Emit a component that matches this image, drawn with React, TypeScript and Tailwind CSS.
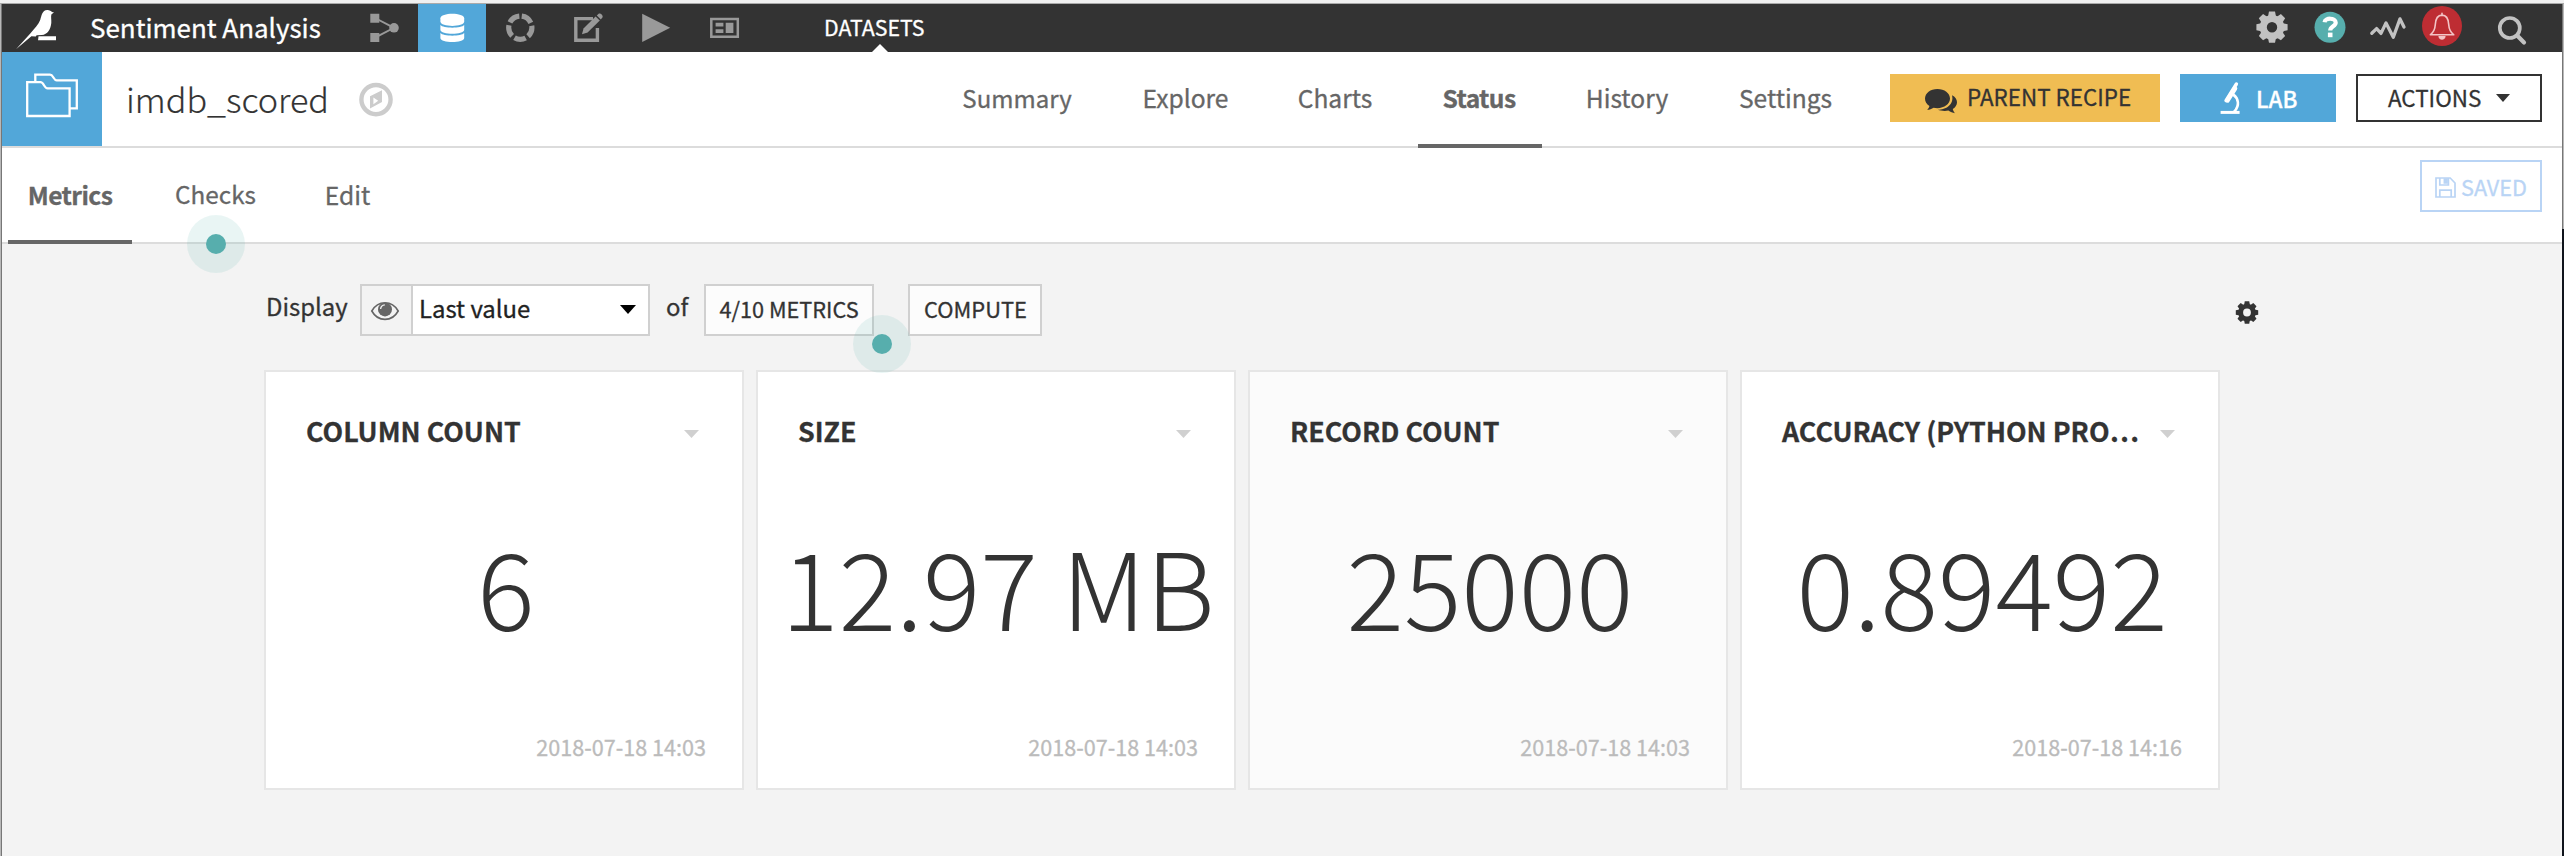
import type { ReactNode } from "react";

function Gear({ cx, cy, hole, body, outer, tooth }: { cx: number; cy: number; hole: number; body: number; outer: number; tooth: number }) {
  const mid = (hole + body) / 2;
  return (
    <g>
      <circle cx={cx} cy={cy} r={mid} fill="none" stroke="currentColor" strokeWidth={body - hole} />
      {[0, 45, 90, 135, 180, 225, 270, 315].map((a) => (
        <path
          key={a}
          transform={`rotate(${a} ${cx} ${cy})`}
          fill="currentColor"
          d={`M${cx - tooth} ${cy - body + 1.5} L${cx - tooth * 0.75} ${cy - outer} H${cx + tooth * 0.75} L${cx + tooth} ${cy - body + 1.5} Z`}
        />
      ))}
    </g>
  );
}

function Bird() {
  return (
    <svg className="h-12 w-[88px] shrink-0 text-white" viewBox="2 4 88 48" fill="currentColor">
      <path d="M16 49.2 L30.5 33.2 C34.5 28.5 38.6 24.5 40.2 20 C41.6 15.8 42 10.2 47.2 10 C49.6 9.9 51 11.2 52 12 L54 12.6 L51.5 14.3 C50.6 16.3 51.6 19.5 51.3 23 C50.7 29.5 47.5 34.6 41.8 35 L36.6 35.2 L35.8 36.4 L31.4 36.2 Z" />
      <path d="M38.5 36.2 H56 V40.3 H38 Z" />
    </svg>
  );
}

function NavCell({ active, children }: { active?: boolean; children: ReactNode }) {
  return (
    <button className={active ? "h-12 w-[68px] bg-[#52a7d9] text-white" : "h-12 w-[68px] text-[#999]"}>
      <svg className="h-12 w-[68px]" viewBox="0 0 68 48" fill="currentColor">
        {children}
      </svg>
    </button>
  );
}

function TopBar() {
  return (
    <header className="flex h-12 bg-[#333] text-white">
      <Bird />
      <div className="w-[260px] pb-0.5 text-[25.95px] leading-[46px] whitespace-nowrap">Sentiment Analysis</div>
      <nav className="flex">
        <NavCell>
          <path d="M20.3 9.7h9v9h-9zM20.3 29h9v9h-9z" />
          <circle cx="44" cy="23.8" r="4.8" />
          <path d="M26 14.5 L44 23.8 L26 33.2" fill="none" stroke="currentColor" strokeWidth="1.9" />
        </NavCell>
        <NavCell active>
          <path d="M22.4 14.2 C22.4 8.2 46.2 8.2 46.2 14.2 V17.6 C46.2 23.4 22.4 23.4 22.4 17.6 Z" />
          <path d="M22.4 21 C25 24.5 43.6 24.5 46.2 21 V25.8 C46.2 31.2 22.4 31.2 22.4 25.8 Z" />
          <path d="M22.4 29 C25 32.5 43.6 32.5 46.2 29 V34 C46.2 39.4 22.4 39.4 22.4 34 Z" />
        </NavCell>
        <NavCell>
          <circle
            cx="34.3"
            cy="23.7"
            r="11.6"
            fill="none"
            stroke="currentColor"
            strokeWidth="5.2"
            strokeDasharray="11.6 2.977"
            strokeDashoffset="-1.49"
            transform="rotate(-90 34.3 23.7)"
          />
        </NavCell>
        <NavCell>
          <path d="M39 14.6 H21.8 V36.3 H43.4 V24" fill="none" stroke="currentColor" strokeWidth="3.4" />
          <path d="M28 30.3 L29.5 24.6 L41.6 12.6 L45.8 16.6 L33.6 28.6 Z" />
          <path d="M42.8 11.4 L44.6 9.8 C46.4 8.6 49.6 11.6 48.4 13.6 L46.8 15.4 Z" />
        </NavCell>
        <NavCell>
          <path d="M20.2 9.7 L48.2 23.8 L20.2 38 Z" />
        </NavCell>
        <NavCell>
          <path d="M21.3 15 H47.8 V32.8 H21.3 Z" fill="none" stroke="currentColor" strokeWidth="2.5" />
          <path d="M25.6 18.8h7.8v3.7h-7.8zM25.6 25.2h7.8v3.7h-7.8zM35.7 18.8h7.7v10.1h-7.7z" />
        </NavCell>
      </nav>
      <div className="relative ml-[66px] pb-0.5 text-[21.3px] leading-[45px]">
        DATASETS
        <svg className="absolute top-10 left-[48px] h-2 w-4" viewBox="0 0 16 8">
          <path d="M0 8 L8 0 L16 8Z" fill="#fff" />
        </svg>
      </div>
      <div className="ml-auto flex text-[#c2c2c2]">
        <svg className="h-12 w-[51px]" viewBox="10 4 51 48">
          <Gear cx={32} cy={27.2} hole={5.2} body={12.3} outer={15.6} tooth={4} />
        </svg>
        <svg className="h-12 w-14" viewBox="61 4 56 48">
          <circle cx="90" cy="27.3" r="15.5" fill="#57aead" />
          <path d="M84.6 22.2 C85 17.6 95.6 17.4 95.7 22.6 C95.8 26.4 90.2 26.2 90.2 30.6" fill="none" stroke="#fff" strokeWidth="4.2" />
          <path d="M87.9 32.6h4.6v4.6h-4.6z" fill="#fff" />
        </svg>
        <svg className="h-12 w-[58px]" viewBox="117 4 58 48" fill="none" stroke="currentColor" strokeWidth="3.3" strokeLinecap="round" strokeLinejoin="round">
          <path d="M131.8 33.3 L136.6 28.6 L141 33.4 L146 22.9 L153.3 37.2 L160 18.9 L164 27" />
        </svg>
        <svg className="h-12 w-[58px]" viewBox="175 4 58 48">
          <circle cx="202" cy="26" r="20" fill="#be2d33" />
          <path
            d="M190.3 34.8 C194 32 195 29.5 195.3 24.5 C195.6 19 197.4 15.2 202 15.1 C206.6 15.2 208.4 19 208.7 24.5 C209 29.5 210 32 213.8 34.8 Z M202 15 V13.2"
            fill="none"
            stroke="#f3c4c6"
            strokeWidth="1.6"
            strokeLinejoin="round"
            strokeLinecap="round"
          />
          <path d="M198.4 36 H205.6 C205.4 41 198.6 41 198.4 36Z" fill="#f3c4c6" />
        </svg>
        <svg className="h-12 w-[89px]" viewBox="233 4 89 48" fill="none" stroke="currentColor">
          <circle cx="269.8" cy="28" r="10" strokeWidth="3.7" />
          <path d="M277.4 35.8 L284 42.4" strokeWidth="4.2" strokeLinecap="round" />
        </svg>
      </div>
    </header>
  );
}

function DatasetHeader() {
  return (
    <div className="flex h-24 border-b-2 border-[#dcdcdc] bg-white">
      <div className="h-[94px] w-[100px] shrink-0 bg-[#52a7d9]">
        <svg className="h-[94px] w-[100px]" viewBox="2 52 100 94" fill="none" stroke="#fff" strokeWidth="2.3">
          <path d="M27.2 82.2 H40.5 C44 82.2 44 88.3 47.6 88.3 H69.6 V116 H27.2 Z" />
          <path d="M35.3 82 V74.6 H50 C53.4 74.6 53.4 80.3 56.6 80.3 H76.8 V108.3 H70" />
        </svg>
      </div>
      <div className="w-[257px] pl-6 text-[34.2px] leading-[92px] font-light text-[#333] [-webkit-text-stroke:0.2px]">imdb_scored</div>
      <svg className="h-[94px] w-[34px] shrink-0 text-[#ccc]" viewBox="359 53 34 94">
        <circle cx="376" cy="100.6" r="14.6" fill="none" stroke="currentColor" strokeWidth="4.4" />
        <path fillRule="evenodd" fill="currentColor" d="M382 91.2 V103 L370 109.4 V97.2 Z M373.4 98.6 V105.2 L378.2 101.8 Z" />
      </svg>
      <nav className="ml-[545px] flex gap-5 text-[24.6px] leading-[91px] text-[#666]">
        <div className="w-40 pr-0.5 text-center text-[24px]">Summary</div>
        <div className="w-[135px] text-center">Explore</div>
        <div className="w-[125px] pr-px text-center">Charts</div>
        <div className="h-24 w-[124px] border-b-4 border-[#666] pr-0.5 text-center font-bold tracking-[-0.6px]">Status</div>
        <div className="w-[132px] pr-0.5 text-center">History</div>
        <div className="w-36 pr-px text-center">Settings</div>
      </nav>
      <div className="mt-[22px] mr-5 ml-auto flex h-12 gap-5 text-[22.4px] whitespace-nowrap">
        <button className="flex w-[270px] bg-[#f0bd53] pl-[34px] leading-[45px] text-[#333]">
          <svg className="h-12 w-[43px]" viewBox="1924 74 43 48" fill="currentColor">
            <path d="M1937.4 89 C1944.4 89 1950 93.2 1950 98.6 C1950 104 1944.4 108.2 1937.4 108.2 C1936 108.2 1934.8 108 1933.6 107.7 C1931.6 109 1929.6 109.7 1927.2 109.8 C1928.4 108.6 1929.2 107.4 1929.4 106.1 C1926.6 104.3 1925 101.6 1925 98.6 C1925 93.2 1930.4 89 1937.4 89 Z" />
            <path d="M1952 95.2 C1955.2 96.8 1957 99.4 1957 102.2 C1957 105 1955.4 107.4 1952.8 109 C1953 110.4 1953.8 111.8 1955 113.2 C1952.6 113 1950.4 112 1948.4 110.6 C1944.6 111.4 1940.6 110.8 1937.8 109.8 C1945.8 109.7 1954.4 104.6 1952 95.2 Z" />
          </svg>
          PARENT RECIPE
        </button>
        <button className="flex w-[156px] bg-[#52a7d9] pl-[38px] leading-[49px] font-medium text-white">
          <svg className="mr-0.5 h-12 w-9" viewBox="2218 74 36 48" fill="none" stroke="currentColor" strokeLinecap="round">
            <path d="M2236.4 84 L2226 100.6" strokeWidth="3.4" />
            <path d="M2235 88.4 L2227.4 100.4" strokeWidth="4.6" />
            <path d="M2233.4 94.6 C2238.4 98.4 2240 105 2234.4 111.4" strokeWidth="2.6" />
            <path d="M2220.6 112.4 H2239.6" strokeWidth="3" strokeLinecap="butt" />
          </svg>
          LAB
        </button>
        <button className="flex w-[186px] border-2 border-[#333] bg-white pl-[30px] leading-[42px] text-[#333]">
          ACTIONS
          <svg className="mt-[18px] ml-[15px] h-2 w-[14px]" viewBox="0 0 14 8">
            <path d="M0 0 H14 L7 8Z" fill="#333" />
          </svg>
        </button>
      </div>
    </div>
  );
}

function Pulse() {
  return (
    <span className="absolute z-10 flex size-[58px] items-center justify-center rounded-full bg-[#57aead]/13">
      <span className="size-5 rounded-full bg-[#57aead]" />
    </span>
  );
}

function StatusTabs() {
  return (
    <div className="flex h-24 border-b-2 border-[#dcdcdc] bg-white pl-1.5 text-[24.6px] leading-[92px] text-[#666]">
      <div className="h-24 w-[124px] border-b-4 border-[#666] text-center font-bold tracking-[-0.6px]">Metrics</div>
      <div className="relative ml-5 w-[130px] pr-[3px] text-center text-[24.3px]">
        Checks
        <div className="absolute top-[67px] left-[35px]">
          <Pulse />
        </div>
      </div>
      <div className="ml-5 w-[95px] pr-1 text-center">Edit</div>
      <button className="mt-3 mr-5 ml-auto flex h-[52px] w-[122px] border-2 border-[#b9d4f5] pl-[13px] text-[21.7px] leading-[49px] text-[#b9d4f5]">
        <svg className="mt-[15px] mr-[5px] h-[21px] w-[21px]" viewBox="0 0 21 21" fill="none" stroke="currentColor" strokeWidth="1.7">
          <path d="M1 1 H15.2 L20 6 V20 H1 Z M4.8 20 V13.2 H16.2 V20 M4.8 1 V8 H13.4 V1" />
          <path d="M9.4 2 H12 V6 H9.4Z" fill="currentColor" />
        </svg>
        SAVED
      </button>
    </div>
  );
}

function Controls() {
  return (
    <div className="flex h-[52px] text-[23.9px] text-[#333]">
      <div className="w-24 pl-0.5 leading-[43px]">Display</div>
      <div className="flex w-[290px] border-2 border-[#d0d0d0] bg-white leading-[44px] text-[#222]">
        <svg className="h-12 w-[51px] shrink-0 border-r-2 border-[#d0d0d0] bg-[#f3f3f3]" viewBox="362 286 49 48">
          <path d="M371.8 311 C378 300 392 300 398.2 311 C392 322.2 378 322.2 371.8 311 Z" fill="none" stroke="#666" strokeWidth="1.6" />
          <circle cx="385" cy="309.4" r="7" fill="#666" />
          <path d="M380.6 309 C380.8 306.6 382.4 305 384.8 304.8" fill="none" stroke="#f3f3f3" strokeWidth="1.3" />
        </svg>
        <span className="ml-[6px]">Last value</span>
        <svg className="mt-[19px] mr-3 ml-auto h-[9px] w-4" viewBox="0 0 16 9">
          <path d="M0 0 H16 L8 9Z" fill="#000" />
        </svg>
      </div>
      <div className="w-[54px] pl-4 leading-[43px]">of</div>
      <button className="relative w-[170px] border-2 border-[#d0d0d0] bg-[#fcfcfc] text-center text-[21.7px] leading-[45px]">
        <span className="block pb-[3px]">4/10 METRICS</span>
        <div className="absolute top-[29px] left-[147px]">
          <Pulse />
        </div>
      </button>
      <button className="ml-[34px] w-[134px] border-2 border-[#d0d0d0] bg-[#fcfcfc] text-center text-[21.9px] leading-[45px]">
        <span className="block pb-[3px] pl-px">COMPUTE</span>
      </button>
      <svg className="mt-4 mr-px ml-auto h-6 w-6 text-[#333]" viewBox="0 0 24 24">
        <Gear cx={12} cy={12.5} hole={3.9} body={8.8} outer={11.2} tooth={3} />
      </svg>
    </div>
  );
}

const METRICS = [
  { name: "COLUMN COUNT", value: "6", date: "2018-07-18 14:03", muted: false },
  { name: "SIZE", value: "12.97 MB", date: "2018-07-18 14:03", muted: false },
  { name: "RECORD COUNT", value: "25000", date: "2018-07-18 14:03", muted: true },
  { name: "ACCURACY (PYTHON PRO…", value: "0.89492", date: "2018-07-18 14:16", muted: false },
];

function MetricCard({ name, value, date, muted }: (typeof METRICS)[number]) {
  return (
    <section className={`flex h-[420px] w-[480px] flex-col border-2 border-[#e6e6e6] ${muted ? "bg-[#fbfbfb]" : "bg-white"}`}>
      <div className="mt-[39px] flex h-10 pr-[43px] pl-10 text-[26.8px] leading-10 font-bold whitespace-nowrap text-[#333]">
        {name}
        <svg className="mt-[19px] ml-auto h-2 w-[15px] shrink-0" viewBox="0 0 15 8">
          <path d="M0 0 H15 L7.5 8Z" fill="#d0d0d0" />
        </svg>
      </div>
      <div className="mt-16 h-[140px] pl-1 text-center text-[107.3px] leading-[140px] font-light whitespace-nowrap text-[#333] [-webkit-text-stroke:0px]">{value}</div>
      <div className="mt-[72px] pr-9 text-right text-[21.6px] leading-10 text-[#bbb]">{date}</div>
    </section>
  );
}

export default function App() {
  return (
    <div className="flex h-[856px] w-[2564px] flex-col overflow-hidden bg-[#f3f3f3] font-['Noto_Sans_CJK_SC',sans-serif] [-webkit-text-stroke:0.3px]">
      <div className="h-1 shrink-0 border-b border-[#aaa] bg-[#f0f0f0]" />
      <div className="flex min-h-0 flex-1">
        <div className="w-0.5 shrink-0 border-r border-[#777] bg-[#b8b8b8]" />
        <main className="flex w-[2560px] flex-col">
          <TopBar />
          <DatasetHeader />
          <StatusTabs />
          <div className="mt-10 ml-[262px] w-[1996px]">
            <Controls />
            <div className="mt-[34px] flex gap-3">
              {METRICS.map((m) => (
                <MetricCard key={m.name} {...m} />
              ))}
            </div>
          </div>
        </main>
        <div className="flex w-0.5 shrink-0 flex-col">
          <div className="h-[225px] border-l border-[#777] bg-[#b8b8b8]" />
          <div className="flex-1 bg-[#10141c]" />
        </div>
      </div>
    </div>
  );
}
